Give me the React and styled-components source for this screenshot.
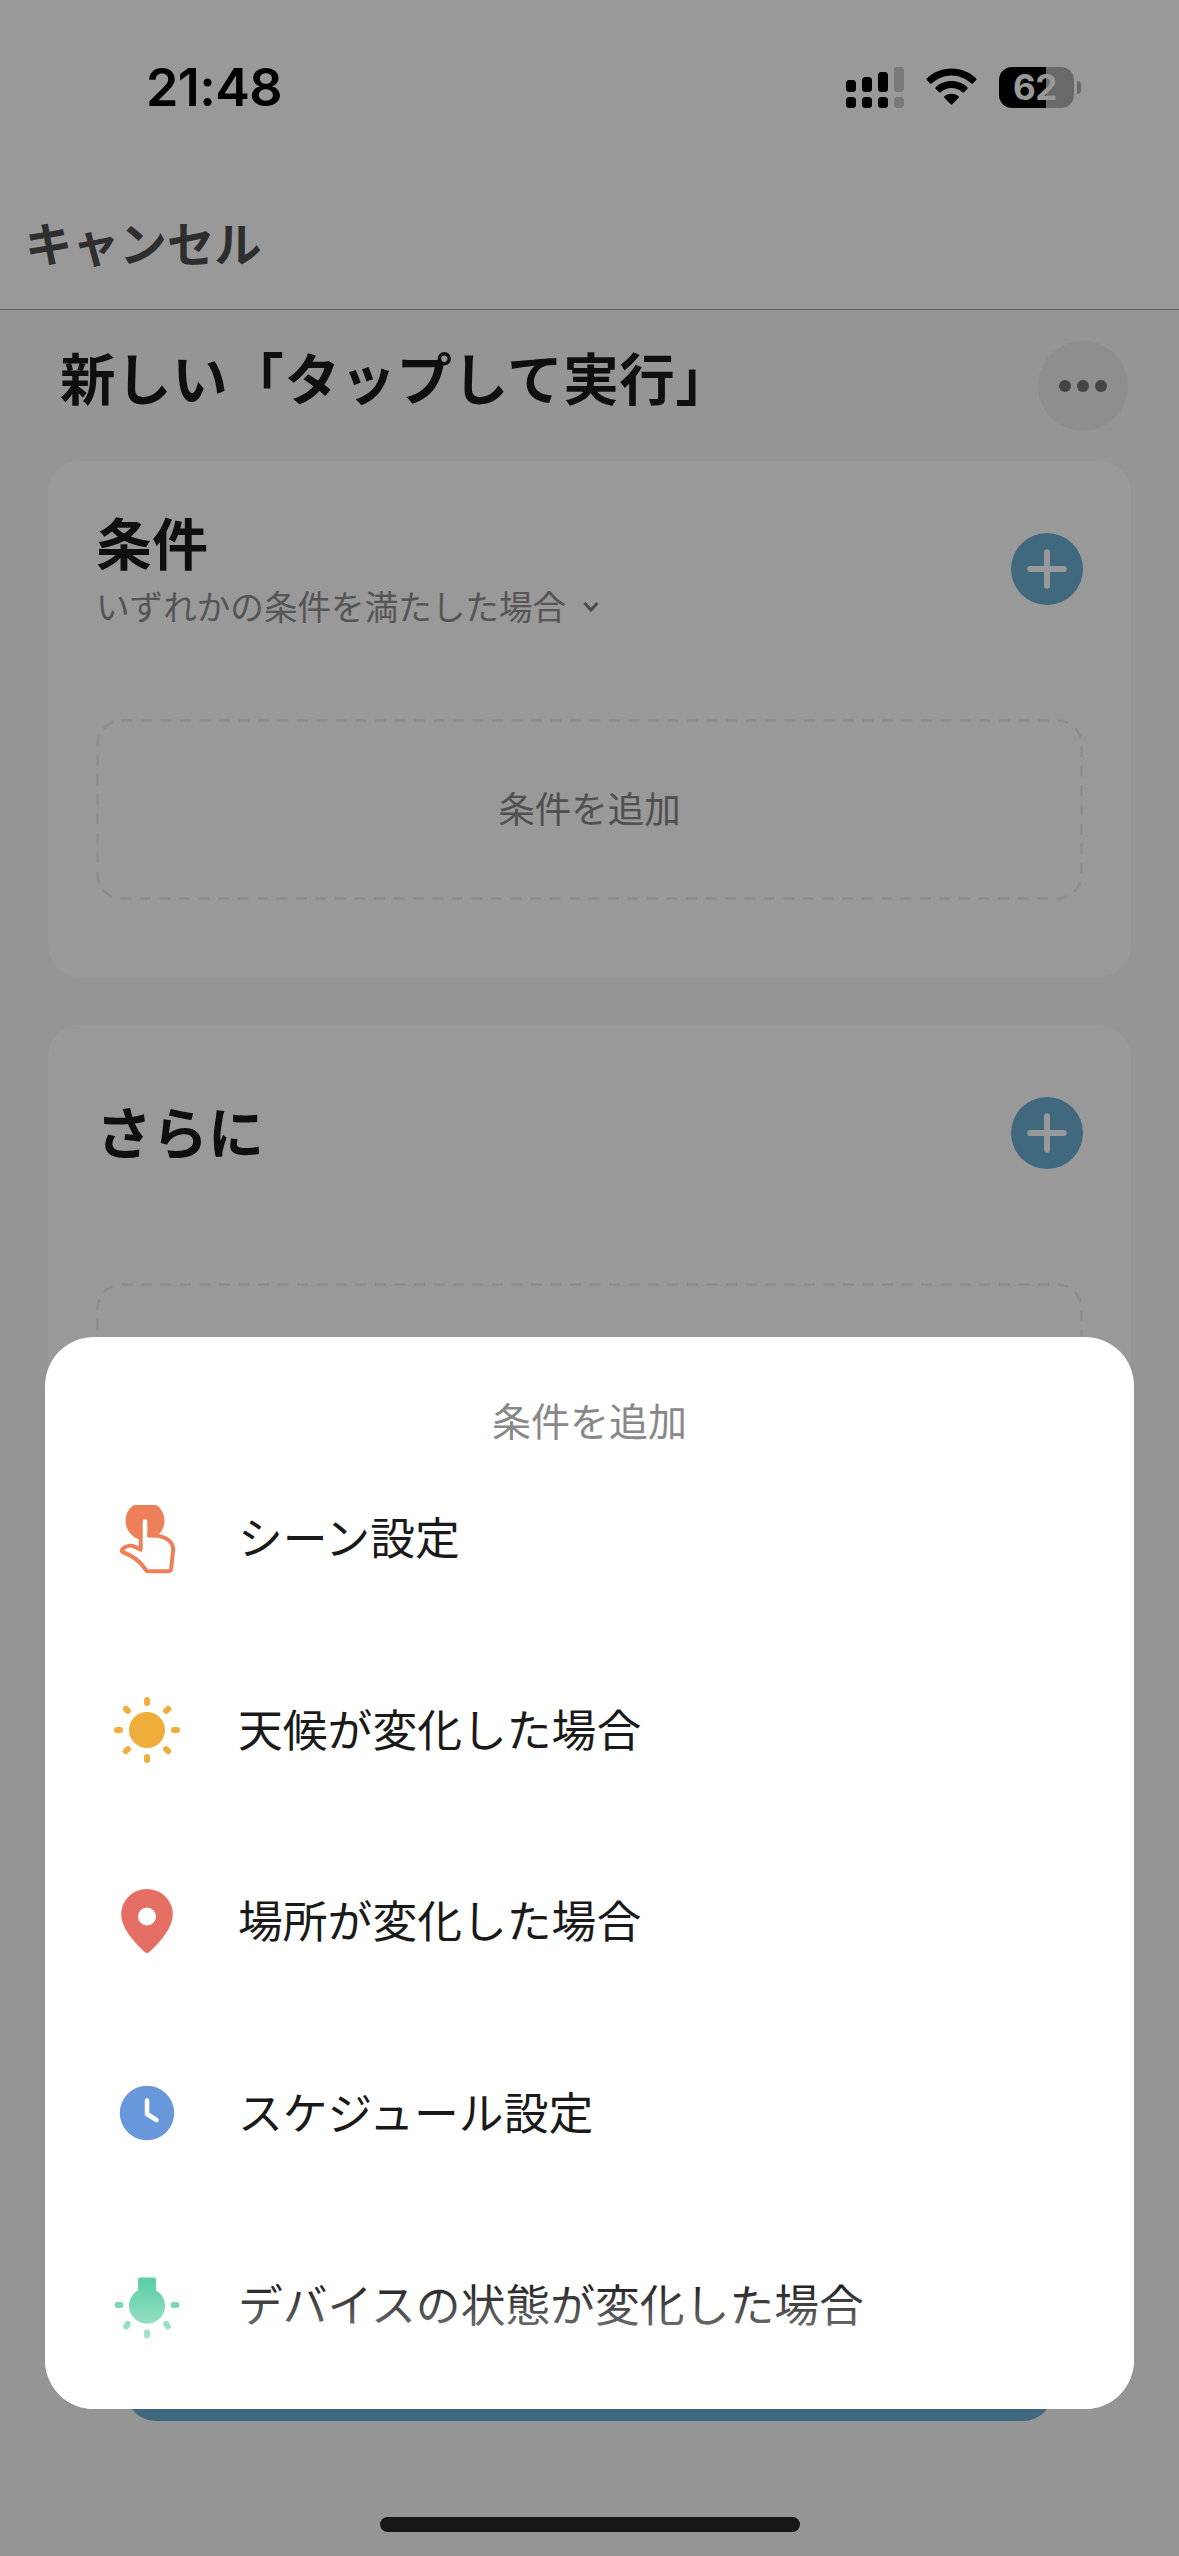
import React from 'react';
import styled, { createGlobalStyle } from 'styled-components';

const GlobalStyle = createGlobalStyle`
  * {
    box-sizing: border-box;
  }

  body {
    margin: 0;
    font-family: Inter, 'Noto Sans CJK JP', sans-serif;
  }

  svg {
    display: block;
    flex: none;
  }
`;

const Screen = styled.div`
  position: relative;
  display: flex;
  flex-direction: column;
  width: 1179px;
  height: 2556px;
  overflow: hidden;
  background: #f8f8f8;
`;

const StatusBar = styled.header`
  display: flex;
  align-items: center;
  height: 176px;
  padding: 0 98px 0 146px;
  background: #fff;
`;

const Time = styled.div`
  font-size: 52px;
  font-weight: 600;
  line-height: 60px;
  letter-spacing: -0.6px;
  color: #000;
`;

const StatusIcons = styled.div`
  display: flex;
  align-items: center;
  gap: 22px;
  margin-left: auto;
  padding-bottom: 2px;
`;

const Battery = styled.div`
  display: flex;
  align-items: center;
  gap: 3px;
`;

const BatteryBody = styled.div`
  display: flex;
  align-items: center;
  justify-content: center;
  width: 75px;
  height: 41px;
  padding-right: 3px;
  border-radius: 13px;
  background: linear-gradient(to right, #000 ${(p) => p.$level}%, #b0b0b0 ${(p) => p.$level}%);
  font-size: 35px;
  font-weight: 700;
  line-height: 41px;
  letter-spacing: -0.5px;
  color: #fff;
`;

const BatteryCap = styled.div`
  width: 4px;
  height: 13px;
  border-radius: 0 4px 4px 0;
  background: #b0b0b0;
`;

const NavBar = styled.nav`
  display: flex;
  align-items: center;
  height: 134px;
  padding: 0 25px 1px;
  border-bottom: 1px solid #a6a6a6;
  background: #fff;
`;

const CancelButton = styled.button`
  padding: 0;
  border: 0;
  background: none;
  font: 600 47.3px/70px 'Noto Sans CJK JP', sans-serif;
  color: #4d4d4d;
`;

const TitleRow = styled.div`
  display: flex;
  align-items: center;
  justify-content: space-between;
  height: 151px;
  padding: 0 51px 0 60px;
`;

const Title = styled.h1`
  margin: -20px 0 0;
  font: 600 55.5px/80px 'Noto Sans CJK JP', sans-serif;
  letter-spacing: 0.6px;
  color: #1a1a1a;
`;

const MoreButton = styled.button`
  display: flex;
  align-items: center;
  justify-content: center;
  gap: 6px;
  width: 90px;
  height: 90px;
  padding: 0;
  border: 0;
  border-radius: 50%;
  background: #ededed;
`;

const Dot = styled.span`
  width: 12px;
  height: 12px;
  border-radius: 50%;
  background: #727272;
`;

const Cards = styled.main`
  display: flex;
  flex-direction: column;
  gap: 48px;
  padding: 0 48px;
`;

const Card = styled.section`
  height: 516px;
  padding: 0 48px;
  border-radius: 32px;
  background: #fff;
`;

const CardHeader = styled.div`
  display: flex;
  align-items: center;
  justify-content: space-between;
  height: 216px;
`;

const CardTitle = styled.h2`
  margin: 0;
  padding-bottom: 6px;
  font: 700 56px/68px 'Noto Sans CJK JP', sans-serif;
  color: #1a1a1a;
`;

const MatchMode = styled.div`
  display: flex;
  align-items: center;
  gap: 17px;
  font: 400 33.6px/50px 'Noto Sans CJK JP', sans-serif;
  color: #8e8e8e;
`;

const AddButton = styled.button`
  display: flex;
  align-items: center;
  justify-content: center;
  width: 72px;
  height: 72px;
  padding: 0;
  border: 0;
  border-radius: 50%;
  background: #6bafd4;
`;

const Placeholder = styled.div`
  position: relative;
  display: flex;
  align-items: center;
  justify-content: center;
  height: 181px;
  margin-top: 42px;
  padding-bottom: 4px;
  font: 400 36.5px/54px 'Noto Sans CJK JP', sans-serif;
  color: #858585;
`;

const DashedOutline = styled.svg`
  position: absolute;
  inset: 0;
`;

const Footer = styled.footer`
  margin-top: auto;
  padding: 0 126px 135px;
`;

const SaveButton = styled.button`
  display: block;
  width: 100%;
  height: 120px;
  border: 0;
  border-radius: 30px;
  background: #6bafd4;
`;

const Backdrop = styled.div`
  position: absolute;
  inset: 0;
  display: flex;
  flex-direction: column;
  align-items: center;
  justify-content: flex-end;
  background: rgba(0, 0, 0, 0.4);
`;

const Sheet = styled.div`
  position: relative;
  width: 1089px;
  height: 1072px;
  border-radius: 49px;
  overflow: hidden;
  background: #fff;
`;

const SheetTitle = styled.div`
  height: 105px;
  padding-top: 52px;
  font: 400 39px/60px 'Noto Sans CJK JP', sans-serif;
  text-align: center;
  color: #888;
`;

const Option = styled.div`
  display: flex;
  align-items: center;
  gap: 53px;
  height: 191.7px;
  padding-left: 64px;
`;

const OptionLabel = styled.span`
  padding-bottom: 4px;
  font: 400 44.8px/66px 'Noto Sans CJK JP', sans-serif;
  color: #1a1a1a;
`;

const SheetFade = styled.div`
  position: absolute;
  left: 0;
  right: 0;
  bottom: 0;
  height: 128px;
  background: linear-gradient(rgba(255, 255, 255, 0), #fff);
`;

const HomeIndicator = styled.div`
  width: 420px;
  height: 15px;
  margin: 108px 0 24px;
  border-radius: 8px;
  background: #171717;
`;

const SignalIcon = () => (
  <svg width="58" height="41" viewBox="0 0 58 41">
    {[13, 10, 5].map((y, i) => (
      <g key={y}>
        <rect x={i * 16} y={y} width="10" height={25 - y} rx="3.5" />
        <rect x={i * 16} y="30" width="10" height="11" rx="3.5" />
      </g>
    ))}
    <rect x="48" y="0" width="10" height="25" rx="3" fill="#cbcbcb" />
    <rect x="48" y="30" width="10" height="11" rx="3.5" fill="#cbcbcb" />
  </svg>
);

const WifiIcon = () => (
  <svg width="51" height="38" viewBox="0 0 51 38">
    <path d="M25.5 0.5C35 .5 44 4.300 50.200 10.500c.5.5.5 1.100 0 1.600l-3.300 3.300c-.5.5-1.100.5-1.600 0C40 10.500 33 7.400 25.500 7.400S11 10.500 5.700 15.400c-.5.5-1.100.5-1.600 0L.8 12.100c-.5-.5-.5-1.100 0-1.600C7 4.300 16 .5 25.500.5z" />
    <path d="M25.500 13.100c6.200 0 11.700 2.300 15.800 6.200.5.5.5 1.100 0 1.600l-3.400 3.400c-.4.4-1 .4-1.500 0-2.900-2.600-6.700-4.200-10.900-4.200s-8 1.600-10.900 4.200c-.5.4-1.100.4-1.500 0l-3.400-3.400c-.5-.5-.5-1.100 0-1.600 4.100-3.900 9.600-6.200 15.800-6.200z" />
    <path d="M25.500 25.700c2.700 0 5.200.9 7.100 2.500.5.400.5 1.100 0 1.600l-6.300 6.400c-.5.5-1.100.5-1.600 0l-6.300-6.400c-.5-.5-.5-1.200 0-1.600 1.900-1.600 4.400-2.500 7.100-2.500z" />
  </svg>
);

const PlusIcon = () => (
  <svg width="40" height="40" viewBox="0 0 40 40" stroke="#fff" strokeWidth="6" strokeLinecap="round">
    <path d="M20 3.200v33.600M3.200 20h33.600" />
  </svg>
);

const ChevronIcon = () => (
  <svg width="16" height="14" viewBox="0 0 16 14" fill="none" stroke="#7d7f84" strokeWidth="3.200">
    <path d="M1.500 4L8 11l6.500-7" />
  </svg>
);

const TapIcon = () => (
  <svg width="76" height="76" viewBox="0 0 76 76">
    <path d="M26 5h20q1.500 0 3 1.200a19.500 19.500 0 1 1-26 0Q24.500 5 26 5z" fill="#ed8059" />
    <path
      d="M31.500 49.500V38l2.200-1V21.600q0-2.300 2.300-2.300t2.300 2.300v15.100l11 -1.300c4.500 1.300 9 3 12.200 6.600 2.600 2.800 2.900 5 2.600 8.500L62.200 68.500q-.4 2.800-3.200 2.800H39.500c-2 0-2.700-1.200-3.700-2.800C30.500 61 23.500 55.500 14.500 52.500c-2-.7-2.300-1.800-.8-3.300 3.500-3.700 8.500-4.500 12.300-2.700z"
      fill="#fff"
    />
    <path
      d="M31.700 36v13.800l-6-3.100C22 44.900 17 45.600 13.700 49c-1.500 1.600-1.200 2.800.8 3.500C23.500 55.500 30.500 61 35.800 68.500c1 1.600 1.700 2.800 3.700 2.800H59q2.800 0 3.200-2.800l1.900-18c.3-3.500 0-5.700-2.600-8.500-3.200-3.600-7.700-5.300-12.200-6.300l-11-.2"
      fill="none"
      stroke="#ed8059"
      strokeWidth="4"
      strokeLinejoin="round"
    />
  </svg>
);

const SunIcon = () => (
  <svg width="76" height="76" viewBox="0 0 76 76" stroke="#efad3b" strokeWidth="6" strokeLinecap="round">
    <circle cx="38" cy="38" r="18" fill="#efad3b" stroke="none" />
    {[0, 45, 90, 135, 180, 225, 270, 315].map((angle) => (
      <path key={angle} d="M38 8v3" transform={`rotate(${angle} 38 38)`} />
    ))}
  </svg>
);

const PinIcon = () => (
  <svg width="76" height="76" viewBox="0 0 76 76">
    <path
      d="M38 6c14.300 0 25.800 11.300 25.800 25.500 0 12.500-11.300 26.500-23.500 37.600q-2.300 2-4.600 0C23.500 58 12.200 44 12.200 31.500 12.200 17.300 23.700 6 38 6z"
      fill="#e66f65"
    />
    <circle cx="38" cy="33.5" r="9" fill="#fff" />
  </svg>
);

const ClockIcon = () => (
  <svg width="76" height="76" viewBox="0 0 76 76">
    <circle cx="38" cy="38" r="27.200" fill="#6897dc" />
    <path
      d="M38 25.500V39l9.500 6"
      fill="none"
      stroke="#fff"
      strokeWidth="4.500"
      strokeLinecap="round"
      strokeLinejoin="round"
    />
  </svg>
);

const BulbIcon = () => (
  <svg width="76" height="76" viewBox="0 0 76 76" fill="#5dcfa4" stroke="#5dcfa4">
    <path
      d="M29 13q0-2.500 2.500-2.500h13Q47 10.500 47 13v10.200A18 18 0 1 1 29 23.200z"
      stroke="none"
    />
    <path d="M8.500 38h3M64.500 38h3M18.700 56.800l-1.500 2.600M57.300 56.800l1.500 2.600M38 65.500v3" strokeWidth="6" strokeLinecap="round" />
  </svg>
);

const DashedBox = ({ children }) => (
  <Placeholder>
    <DashedOutline width="987" height="181">
      <rect
        x="1.5"
        y="1.5"
        width="984"
        height="178"
        rx="24"
        fill="none"
        stroke="#ebebeb"
        strokeWidth="2.5"
        strokeDasharray="11 8.500"
      />
    </DashedOutline>
    {children}
  </Placeholder>
);

const options = [
  { label: 'シーン設定', Icon: TapIcon },
  { label: '天候が変化した場合', Icon: SunIcon },
  { label: '場所が変化した場合', Icon: PinIcon },
  { label: 'スケジュール設定', Icon: ClockIcon },
  { label: 'デバイスの状態が変化した場合', Icon: BulbIcon },
];

const App = () => (
  <>
    <GlobalStyle />
    <Screen lang="ja">
      <StatusBar>
        <Time>21:48</Time>
        <StatusIcons>
          <SignalIcon />
          <WifiIcon />
          <Battery>
            <BatteryBody $level={62.5}>62</BatteryBody>
            <BatteryCap />
          </Battery>
        </StatusIcons>
      </StatusBar>

      <NavBar>
        <CancelButton>キャンセル</CancelButton>
      </NavBar>

      <TitleRow>
        <Title>新しい「タップして実行」</Title>
        <MoreButton>
          <Dot />
          <Dot />
          <Dot />
        </MoreButton>
      </TitleRow>

      <Cards>
        <Card>
          <CardHeader>
            <div>
              <CardTitle>条件</CardTitle>
              <MatchMode>
                いずれかの条件を満たした場合
                <ChevronIcon />
              </MatchMode>
            </div>
            <AddButton>
              <PlusIcon />
            </AddButton>
          </CardHeader>
          <DashedBox>条件を追加</DashedBox>
        </Card>

        <Card>
          <CardHeader>
            <CardTitle>さらに</CardTitle>
            <AddButton>
              <PlusIcon />
            </AddButton>
          </CardHeader>
          <DashedBox />
        </Card>
      </Cards>

      <Footer>
        <SaveButton />
      </Footer>

      <Backdrop>
        <Sheet>
          <SheetTitle>条件を追加</SheetTitle>
          {options.map(({ label, Icon }) => (
            <Option key={label}>
              <Icon />
              <OptionLabel>{label}</OptionLabel>
            </Option>
          ))}
          <SheetFade />
        </Sheet>
        <HomeIndicator />
      </Backdrop>
    </Screen>
  </>
);

export default App;
